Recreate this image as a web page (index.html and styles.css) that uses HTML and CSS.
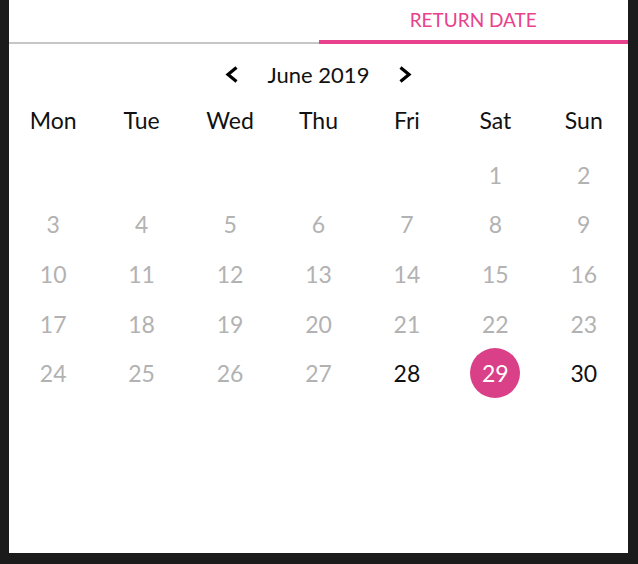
FILE: index.html
```html
<!DOCTYPE html>
<html lang="en">
<head>
    <meta charset="UTF-8">
    <meta name="viewport" content="width=device-width, initial-scale=1.0">
    <title>Return date</title>
    <link rel="stylesheet" href="styles.css">
</head>
<body>
    <div class="panel">
        <div class="tabs">
            <div class="tab"></div>
            <div class="tab active">RETURN DATE</div>
        </div>
        <div class="month-nav">
            <button class="nav-btn" aria-label="Previous month">
                <svg width="14" height="17" viewBox="0 0 14 17"><polyline points="11.5,1.5 3,8.5 11.5,15.5" fill="none" stroke="#000" stroke-width="3.2"/></svg>
            </button>
            <span class="month">June 2019</span>
            <button class="nav-btn" aria-label="Next month">
                <svg width="14" height="17" viewBox="0 0 14 17"><polyline points="2.5,1.5 11,8.5 2.5,15.5" fill="none" stroke="#000" stroke-width="3.2"/></svg>
            </button>
        </div>
        <div class="weekdays">
            <div>Mon</div>
            <div>Tue</div>
            <div>Wed</div>
            <div>Thu</div>
            <div>Fri</div>
            <div>Sat</div>
            <div>Sun</div>
        </div>
        <div class="days">
            <div></div><div></div><div></div><div></div><div></div>
            <div class="day past">1</div>
            <div class="day past">2</div>
            <div class="day past">3</div>
            <div class="day past">4</div>
            <div class="day past">5</div>
            <div class="day past">6</div>
            <div class="day past">7</div>
            <div class="day past">8</div>
            <div class="day past">9</div>
            <div class="day past">10</div>
            <div class="day past">11</div>
            <div class="day past">12</div>
            <div class="day past">13</div>
            <div class="day past">14</div>
            <div class="day past">15</div>
            <div class="day past">16</div>
            <div class="day past">17</div>
            <div class="day past">18</div>
            <div class="day past">19</div>
            <div class="day past">20</div>
            <div class="day past">21</div>
            <div class="day past">22</div>
            <div class="day past">23</div>
            <div class="day past">24</div>
            <div class="day past">25</div>
            <div class="day past">26</div>
            <div class="day past">27</div>
            <div class="day">28</div>
            <div class="day"><span class="selected">29</span></div>
            <div class="day">30</div>
        </div>
    </div>
</body>
</html>
```

FILE: styles.css
```css
body {
    margin: 0;
    background-color: #1b1b1b;
    font-family: Lato, "Noto Sans", sans-serif;
    color: #111;
}
.panel {
    margin-left: 9px;
    width: 619px;
    height: 553px;
    background-color: #fff;
}
.tabs {
    display: flex;
    height: 44px;
}
.tab {
    flex: 1;
    box-sizing: border-box;
    border-bottom: 2px solid #c6c6c6;
    display: flex;
    align-items: center;
    justify-content: center;
    padding-bottom: 4px;
    font-size: 19px;
    color: #e8418d;
}
.tab.active {
    border-bottom: 4px solid #e8418d;
    padding-bottom: 2px;
}
.month-nav {
    display: flex;
    justify-content: center;
    align-items: center;
    gap: 29px;
    height: 36px;
    margin-top: 12px;
}
.nav-btn {
    border: none;
    background: none;
    padding: 0;
    display: flex;
    cursor: pointer;
}
.month {
    font-size: 22px;
}
.weekdays {
    display: grid;
    grid-template-columns: repeat(7, 1fr);
    height: 40px;
    margin-top: 8px;
    align-items: center;
    text-align: center;
    font-size: 23px;
}
.days {
    display: grid;
    grid-template-columns: repeat(7, 1fr);
    grid-auto-rows: 49.6px;
    margin-top: 10px;
    font-size: 23px;
}
.day {
    display: flex;
    align-items: center;
    justify-content: center;
}
.day.past {
    color: #b2b2b2;
}
.selected {
    width: 50px;
    height: 50px;
    border-radius: 50%;
    background-color: #d94087;
    color: #fff;
    display: flex;
    align-items: center;
    justify-content: center;
}
```
